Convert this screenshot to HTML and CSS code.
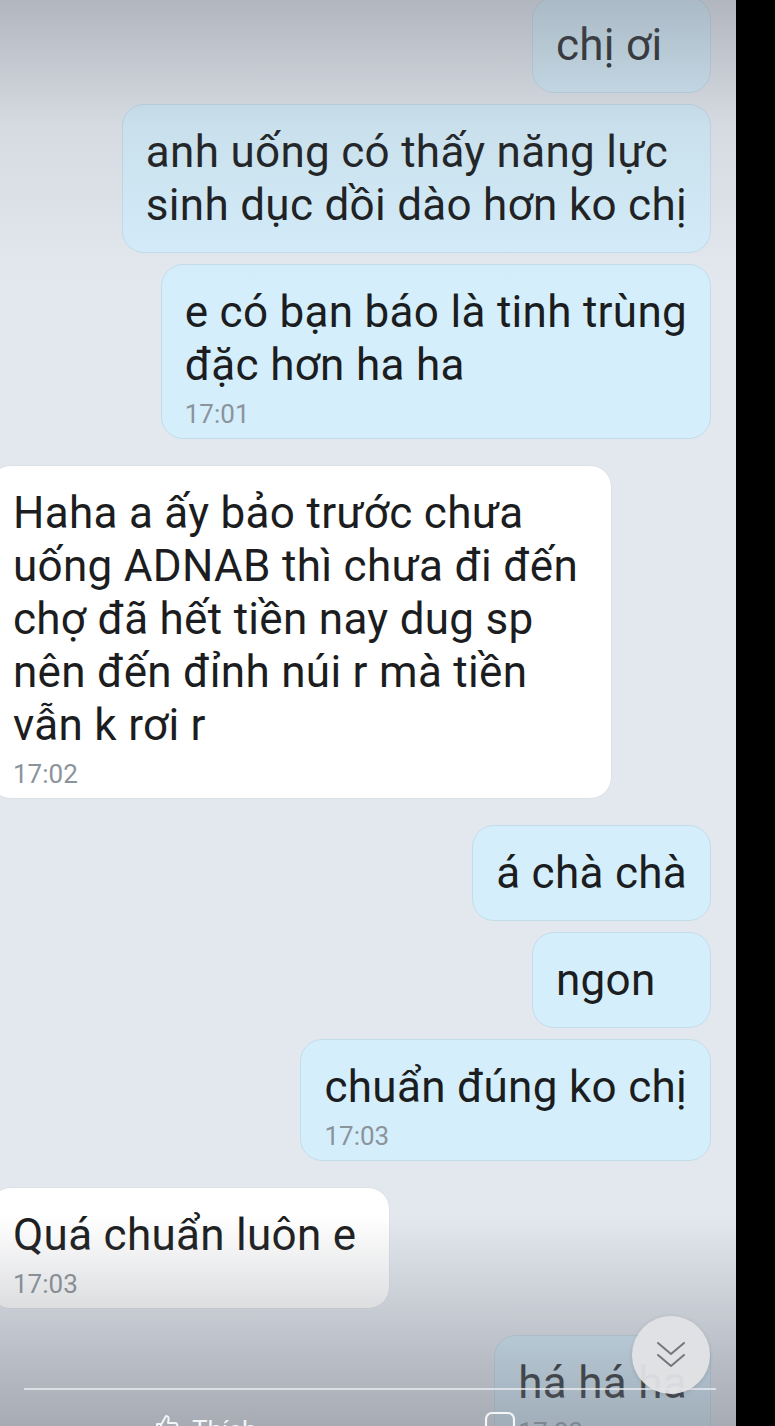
FILE: index.html
```html
<!DOCTYPE html>
<html lang="vi">
<head>
<meta charset="utf-8">
<title>Chat</title>
<link rel="stylesheet" href="styles.css">
</head>
<body>
<div class="screen">
  <div class="chat">
    <div class="msg out first"><div class="bubble">chị ơi</div></div>
    <div class="msg out"><div class="bubble">anh uống có thấy năng lực<br>sinh dục dồi dào hơn ko chị</div></div>
    <div class="msg out"><div class="bubble timed">e có bạn báo là tinh trùng<br>đặc hơn ha ha<div class="time">17:01</div></div></div>
    <div class="msg in group"><div class="bubble timed">Haha a ấy bảo trước chưa<br>uống ADNAB thì chưa đi đến<br>chợ đã hết tiền nay dug sp<br>nên đến đỉnh núi r mà tiền<br>vẫn k rơi r<div class="time">17:02</div></div></div>
    <div class="msg out group"><div class="bubble">á chà chà</div></div>
    <div class="msg out"><div class="bubble">ngon</div></div>
    <div class="msg out"><div class="bubble timed">chuẩn đúng ko chị<div class="time">17:03</div></div></div>
    <div class="msg in group"><div class="bubble timed">Quá chuẩn luôn e<div class="time">17:03</div></div></div>
    <div class="msg out group"><div class="bubble timed">há há ha<div class="time">17:03</div></div></div>
  </div>

  <div class="shade-top"></div>
  <div class="shade-bottom"></div>

  <div class="viewer-bar">
    <div class="viewer-line"></div>
    <div class="viewer-actions">
      <div class="action like">
        <svg class="act-icon" width="26" height="26" viewBox="0 0 26 26" fill="none" stroke="#f4f5f7" stroke-width="2" stroke-linejoin="round"><path d="M3 11h4v13H3z M7 12l5-9c2 0 3 1.5 2.5 4L14 10h7c1.6 0 2.6 1.4 2.2 3l-2 8c-.4 1.6-1.6 2.5-3 2.5H7"/></svg>
        <span>Thích</span>
      </div>
      <div class="action comment">
        <svg class="act-icon" width="32" height="28" viewBox="0 0 32 28" fill="none" stroke="#f4f5f7" stroke-width="2.2"><rect x="2" y="2" width="28" height="20" rx="6"/></svg>
      </div>
    </div>
  </div>

  <div class="scroll-down">
    <svg width="30" height="30" viewBox="0 0 30 30" fill="none" stroke="#74767a" stroke-width="2" stroke-linecap="round" stroke-linejoin="round"><path d="M2 3l13 11 13-11M2 15l13 11 13-11"/></svg>
  </div>
</div>
</body>
</html>
```

FILE: styles.css
```css
html, body {
  margin: 0;
  padding: 0;
  background: #000;
  overflow: hidden;
}

.screen {
  position: relative;
  width: 736px;
  height: 1426px;
  overflow: hidden;
  background: #e3e8ef;
  font-family: Roboto, "Noto Sans", "DejaVu Sans", sans-serif;
}

.chat {
  display: flex;
  flex-direction: column;
}

.msg {
  display: flex;
  margin-top: 11px;
}

.msg.out {
  justify-content: flex-end;
  padding-right: 25px;
}

.msg.in {
  justify-content: flex-start;
  margin-left: -11px;
}

.msg.group {
  margin-top: 26px;
}

.msg.first {
  margin-top: -3px;
}

.bubble {
  min-width: 179px;
  box-sizing: border-box;
  padding: 21px 23px 20px;
  border-radius: 22px;
  font-size: 44px;
  line-height: 53px;
  letter-spacing: 0.3px;
  color: #1b1d20;
  white-space: nowrap;
}

.out .bubble {
  background: #d5eefb;
  border: 1px solid #c4dcea;
}

.in .bubble {
  background: #ffffff;
  border: 1px solid #dde2e8;
  padding-right: 33px;
}

.bubble.timed {
  padding-bottom: 6px;
}

.time {
  font-size: 26px;
  line-height: 36px;
  margin-top: 4px;
  letter-spacing: 0;
  color: #8b939b;
}

.shade-top {
  position: absolute;
  left: 0;
  right: 0;
  top: 0;
  height: 280px;
  background: linear-gradient(to bottom, rgba(118, 122, 132, 0.45), rgba(118, 122, 132, 0.12) 45%, rgba(118, 122, 132, 0));
  pointer-events: none;
}

.shade-bottom {
  position: absolute;
  left: 0;
  right: 0;
  bottom: 0;
  height: 210px;
  background: linear-gradient(to bottom, rgba(118, 122, 132, 0), rgba(118, 122, 132, 0.4) 70%, rgba(118, 122, 132, 0.55));
  pointer-events: none;
}

.viewer-bar {
  position: absolute;
  left: 0;
  right: 0;
  top: 1388px;
}

.viewer-line {
  height: 2px;
  margin: 0 20px 0 24px;
  background: rgba(236, 238, 243, 0.75);
}

.viewer-actions {
  display: flex;
  padding-top: 25px;
  color: #f4f5f7;
  font-size: 26px;
  line-height: 30px;
}

.action {
  display: flex;
  align-items: flex-start;
  gap: 12px;
}

.action.like {
  margin-left: 154px;
}

.action.comment {
  margin-left: 228px;
  margin-top: -2px;
}

.act-icon {
  flex: none;
  margin-top: -2px;
}

.scroll-down {
  position: absolute;
  left: 632px;
  top: 1316px;
  width: 78px;
  height: 78px;
  border-radius: 50%;
  background: rgba(226, 227, 229, 0.95);
  box-shadow: 0 1px 4px rgba(0, 0, 0, 0.12);
  display: flex;
  align-items: center;
  justify-content: center;
}
```
